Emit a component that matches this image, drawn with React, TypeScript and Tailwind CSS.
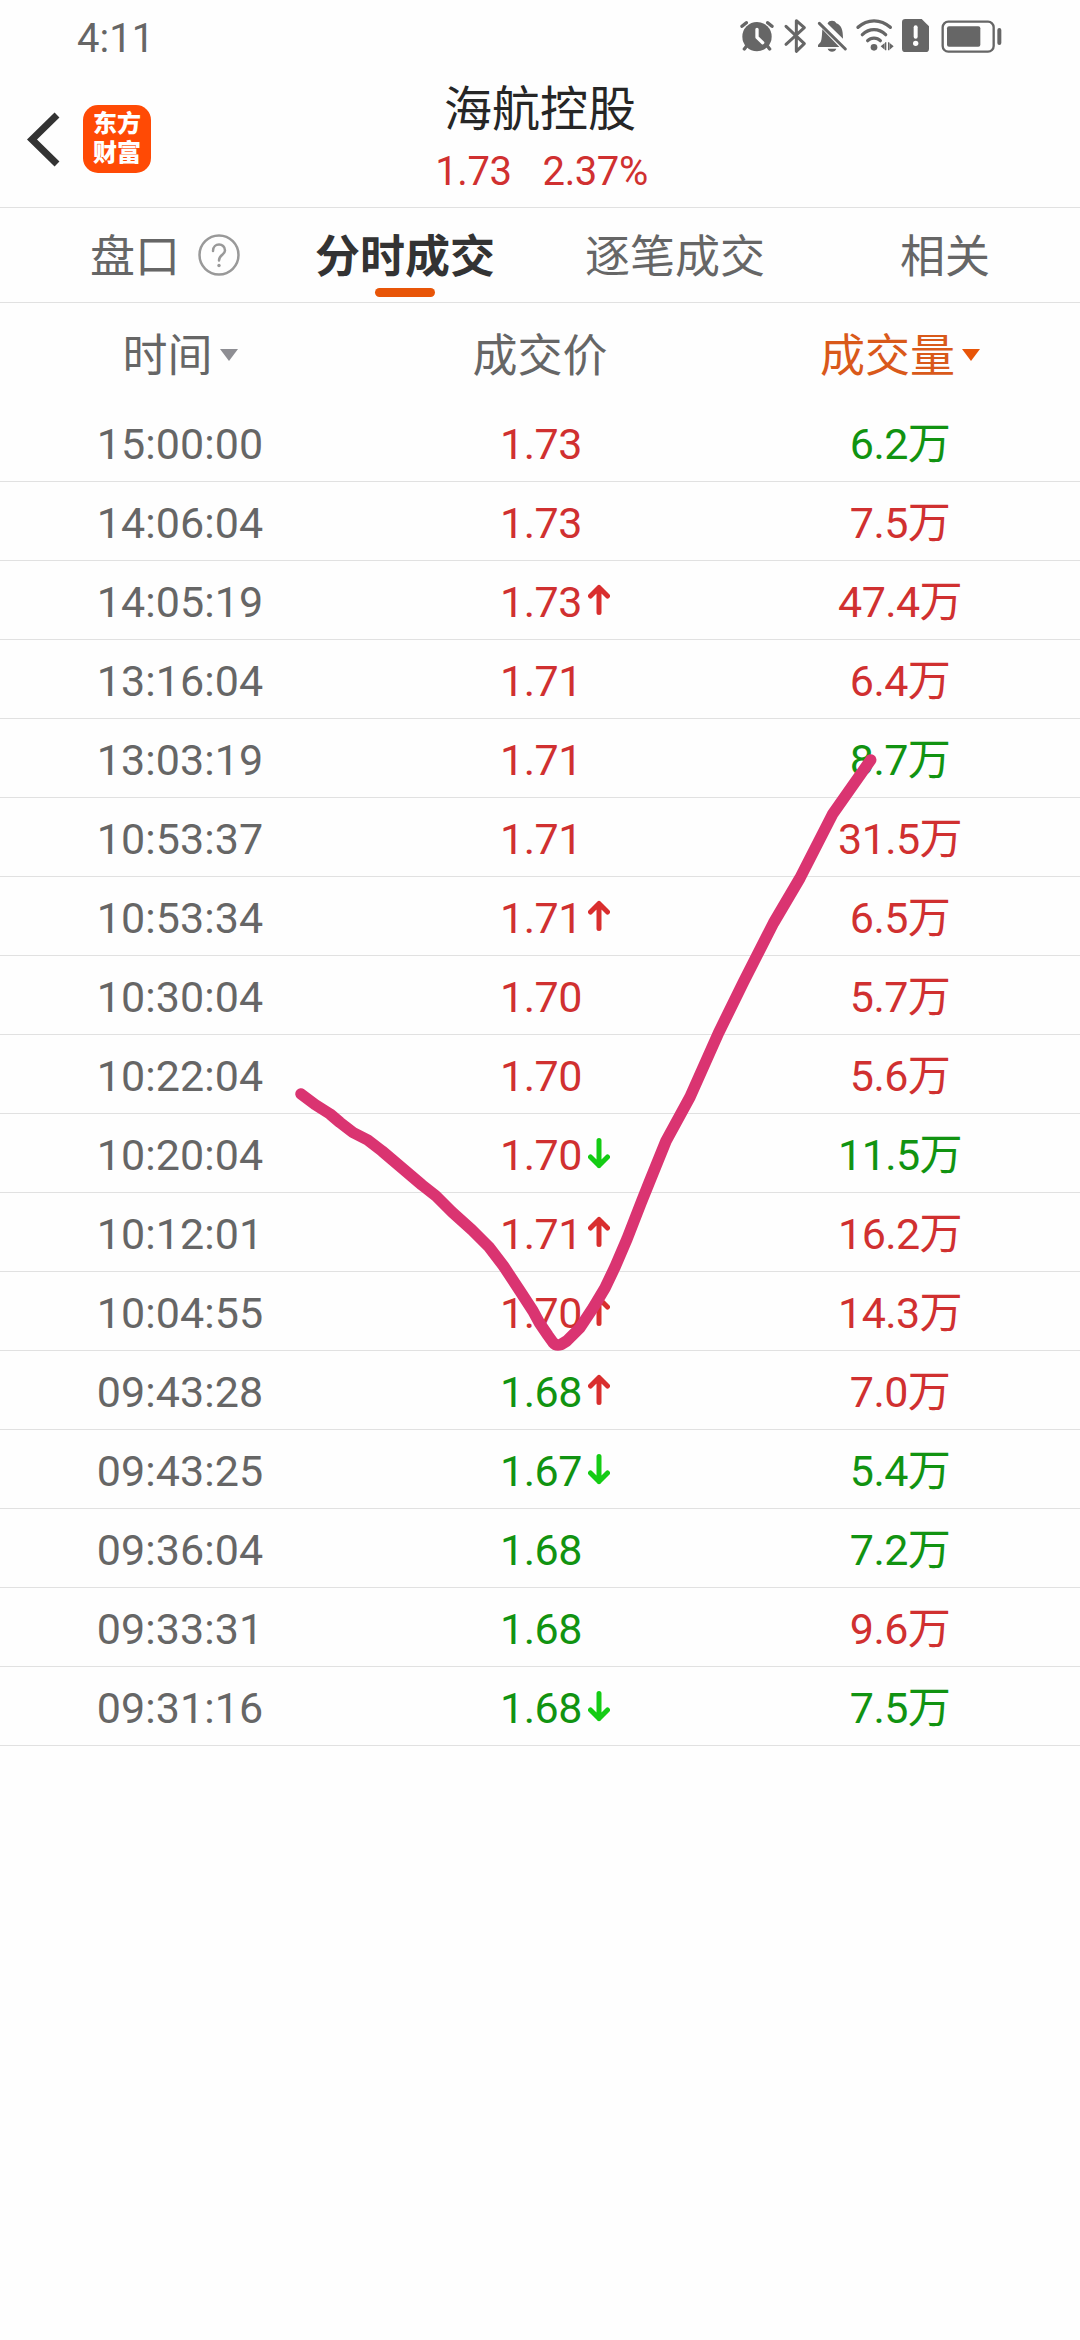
type Tone = 'up' | 'down';

interface Trade {
  time: string;
  price: string;
  priceTone: Tone;
  arrow?: Tone;
  volume: string;
  volumeTone: Tone;
}

const trades: Trade[] = [
  { time: '15:00:00', price: '1.73', priceTone: 'up', volume: '6.2万', volumeTone: 'down' },
  { time: '14:06:04', price: '1.73', priceTone: 'up', volume: '7.5万', volumeTone: 'up' },
  { time: '14:05:19', price: '1.73', priceTone: 'up', arrow: 'up', volume: '47.4万', volumeTone: 'up' },
  { time: '13:16:04', price: '1.71', priceTone: 'up', volume: '6.4万', volumeTone: 'up' },
  { time: '13:03:19', price: '1.71', priceTone: 'up', volume: '8.7万', volumeTone: 'down' },
  { time: '10:53:37', price: '1.71', priceTone: 'up', volume: '31.5万', volumeTone: 'up' },
  { time: '10:53:34', price: '1.71', priceTone: 'up', arrow: 'up', volume: '6.5万', volumeTone: 'up' },
  { time: '10:30:04', price: '1.70', priceTone: 'up', volume: '5.7万', volumeTone: 'up' },
  { time: '10:22:04', price: '1.70', priceTone: 'up', volume: '5.6万', volumeTone: 'up' },
  { time: '10:20:04', price: '1.70', priceTone: 'up', arrow: 'down', volume: '11.5万', volumeTone: 'down' },
  { time: '10:12:01', price: '1.71', priceTone: 'up', arrow: 'up', volume: '16.2万', volumeTone: 'up' },
  { time: '10:04:55', price: '1.70', priceTone: 'up', arrow: 'up', volume: '14.3万', volumeTone: 'up' },
  { time: '09:43:28', price: '1.68', priceTone: 'down', arrow: 'up', volume: '7.0万', volumeTone: 'up' },
  { time: '09:43:25', price: '1.67', priceTone: 'down', arrow: 'down', volume: '5.4万', volumeTone: 'down' },
  { time: '09:36:04', price: '1.68', priceTone: 'down', volume: '7.2万', volumeTone: 'down' },
  { time: '09:33:31', price: '1.68', priceTone: 'down', volume: '9.6万', volumeTone: 'up' },
  { time: '09:31:16', price: '1.68', priceTone: 'down', arrow: 'down', volume: '7.5万', volumeTone: 'down' },
];

const toneClass: Record<Tone, string> = {
  up: 'text-[#d03030]',
  down: 'text-[#119311]',
};

function StatusIcons() {
  return (
    <svg className="h-[70px] w-[360px]" viewBox="0 0 1080 210" fill="#666" stroke="none">
      {/* alarm clock */}
      <circle cx="111" cy="110" r="44" />
      <path d="M66 79L79 68M156 79L143 68M80 138L73 147M142 138L149 147" stroke="#666" strokeWidth="10" strokeLinecap="round" fill="none" />
      <path d="M111 88V112L128 128" stroke="#fefefe" strokeWidth="10" strokeLinecap="round" strokeLinejoin="round" fill="none" />
      {/* bluetooth */}
      <path d="M198 79L253 131L229 154V62L253 83L198 133" stroke="#666" strokeWidth="9" strokeLinecap="round" strokeLinejoin="round" fill="none" />
      {/* muted bell */}
      <path d="M323 70C327 60 345 60 349 70C364 76 369 88 369 116L323 71ZM307 88L358 141H294V135L302 126C306 118 306 100 307 88Z" />
      <path d="M323 146H349C346 158 326 158 323 146Z" />
      <path d="M298 70L376 147" stroke="#666" strokeWidth="9" strokeLinecap="round" />
      {/* wifi */}
      <path d="M414 82C442 56 482 56 511 82M427 104C448 84 476 84 497 104M443 122C453 112 471 112 481 122" stroke="#666" strokeWidth="10" strokeLinecap="round" fill="none" />
      <circle cx="462" cy="142" r="10" />
      <path d="M482 139L494 129V149ZM521 139L509 129V149ZM495 127H499V151H495ZM504 127H508V151H504Z" />
      {/* sim warning */}
      <path d="M556 57H605L627 79V146Q627 156 617 156H556Q546 156 546 146V67Q546 57 556 57Z" />
      <path d="M587 82V110" stroke="#fefefe" strokeWidth="12" strokeLinecap="round" />
      <circle cx="587" cy="130" r="8" fill="#fefefe" />
      {/* battery */}
      <rect x="668" y="65" width="153" height="90" rx="17" fill="none" stroke="#666" strokeWidth="7" />
      <rect x="681" y="79" width="100" height="61" rx="6" />
      <rect x="832" y="84" width="12" height="51" rx="6" />
    </svg>
  );
}

function StatusBar() {
  return (
    <div className="flex h-[70px] items-start justify-between">
      <span className="pt-[15px] pl-[77px] text-[40px] leading-[47px] text-[#666]">4:11</span>
      <StatusIcons />
    </div>
  );
}

function Header() {
  return (
    <header className="grid h-[138px] grid-cols-[200px_1fr_200px] border-b border-[#e1e1e1]">
      <div className="flex items-start pt-[35px] pl-[25px]">
        <svg className="mt-[4px] h-[60px] w-[58px] shrink-0" viewBox="0 0 58 60" fill="none" stroke="#333" strokeWidth="7">
          <path d="M32 6L7 30.500L32 55" />
        </svg>
        <div className="flex h-[68px] w-[68px] flex-col items-center rounded-[15px] bg-[#ff4a05] pt-[5px] text-[24px] leading-[29px] font-black text-white">
          <span>东方</span>
          <span>财富</span>
        </div>
      </div>
      <div className="flex flex-col items-center">
        <h1 className="mt-[10px] text-[48px] leading-[60px] text-[#262626]">海航控股</h1>
        <div className="mt-[8px] flex gap-[31px] pl-[3px] text-[40px] leading-[47px] tracking-[-0.4px] text-[#d03030]">
          <span>1.73</span>
          <span>2.37%</span>
        </div>
      </div>
    </header>
  );
}

function Tabs() {
  return (
    <nav className="flex h-[95px] items-start border-b border-[#e1e1e1] pl-[90px] text-[45px] leading-[100px] text-[#666]">
      <div className="flex w-[225px] items-start">
        <span>盘口</span>
        <svg className="mt-[26px] ml-[18px] h-[42px] w-[42px]" viewBox="0 0 42 42" fill="none" stroke="#999" strokeWidth="2.500" strokeLinecap="round">
          <circle cx="21" cy="21" r="19.500" />
          <path d="M15 17C15 8.500 27 8.500 27 16.500C27 21 21 20.500 21 26.500" />
          <circle cx="21" cy="31.500" r="1.700" fill="#999" stroke="none" />
        </svg>
      </div>
      <div className="relative w-[180px] font-bold text-[#333]">
        分时成交
        <span className="absolute top-[80px] left-[60px] h-[9px] w-[60px] rounded-full bg-[#e85508]" />
      </div>
      <span className="ml-[90px] w-[180px]">逐笔成交</span>
      <span className="ml-[135px]">相关</span>
    </nav>
  );
}

function Caret({ className }: { className: string }) {
  return (
    <svg className={className} viewBox="0 0 18 12" fill="currentColor">
      <path d="M0 0H18L9 12Z" />
    </svg>
  );
}

function TableHead() {
  return (
    <div className="grid h-[100px] grid-cols-3 text-center text-[45px] leading-[108px] text-[#666]">
      <div className="flex items-start justify-center">
        <span>时间</span>
        <Caret className="mt-[46px] ml-[7px] h-[12px] w-[18px] text-[#8e8e93]" />
      </div>
      <div>成交价</div>
      <div className="flex items-start justify-center text-[#d9591a]">
        <span>成交量</span>
        <Caret className="mt-[46px] ml-[7px] h-[12px] w-[18px] text-[#e85508]" />
      </div>
    </div>
  );
}

function Arrow({ tone }: { tone: Tone }) {
  return (
    <svg
      className={
        tone === 'up'
          ? 'absolute top-[23px] left-[228px] h-[32px] w-[22px] text-[#d92e2e]'
          : 'absolute top-[23px] left-[228px] h-[32px] w-[22px] rotate-180 text-[#14cc14]'
      }
      viewBox="0 0 22 32"
      fill="none"
      stroke="currentColor"
      strokeWidth="5"
      strokeLinecap="round"
      strokeLinejoin="round"
    >
      <path d="M11 28.500V3.500M2.500 12L11 3.500L19.500 12" />
    </svg>
  );
}

function TradeRow({ trade }: { trade: Trade }) {
  return (
    <div className="grid h-[79px] grid-cols-3 border-b border-[#e1e1e1] text-center text-[43px] leading-[83px]">
      <span className="tracking-[0.1px] text-[#666]">{trade.time}</span>
      <span className={`relative pl-[2px] tracking-[-0.4px] ${toneClass[trade.priceTone]}`}>
        {trade.price}
        {trade.arrow && <Arrow tone={trade.arrow} />}
      </span>
      <span className={`tracking-[-0.6px] ${toneClass[trade.volumeTone]}`}>
        {trade.volume}
      </span>
    </div>
  );
}

function HandDrawnCheck() {
  return (
    <svg
      className="pointer-events-none absolute top-[740px] left-[280px] h-[640px] w-[620px]"
      viewBox="280 740 620 640"
      fill="none"
      stroke="#da3471"
      strokeWidth="11.500"
      strokeLinecap="round"
      strokeLinejoin="round"
    >
      <path d="M301 1094L315 1104.500L330 1114L340 1122.500L353 1132.500L367.700 1140L382 1151L402 1168L422 1185L436 1196L452 1212L472 1230L489 1247L503.500 1266L520 1291L533 1311L539.500 1323L548 1335.500L553 1342.500Q556 1346 561 1344.500L566.700 1341L580 1327.700L593 1308L605 1288L615 1267L627 1239L641 1203L649 1183L666 1141L690 1097L718.500 1033L743.500 982L773.500 923L800 878L832.700 814L870.700 760" />
    </svg>
  );
}

export default function App() {
  return (
    <div className="relative h-[2340px] w-[1080px] overflow-hidden bg-[#fefefe] font-[Roboto,'Noto_Sans_CJK_SC',sans-serif]">
      <StatusBar />
      <Header />
      <Tabs />
      <TableHead />
      <main>
        {trades.map((trade) => (
          <TradeRow key={trade.time} trade={trade} />
        ))}
      </main>
      <HandDrawnCheck />
    </div>
  );
}
